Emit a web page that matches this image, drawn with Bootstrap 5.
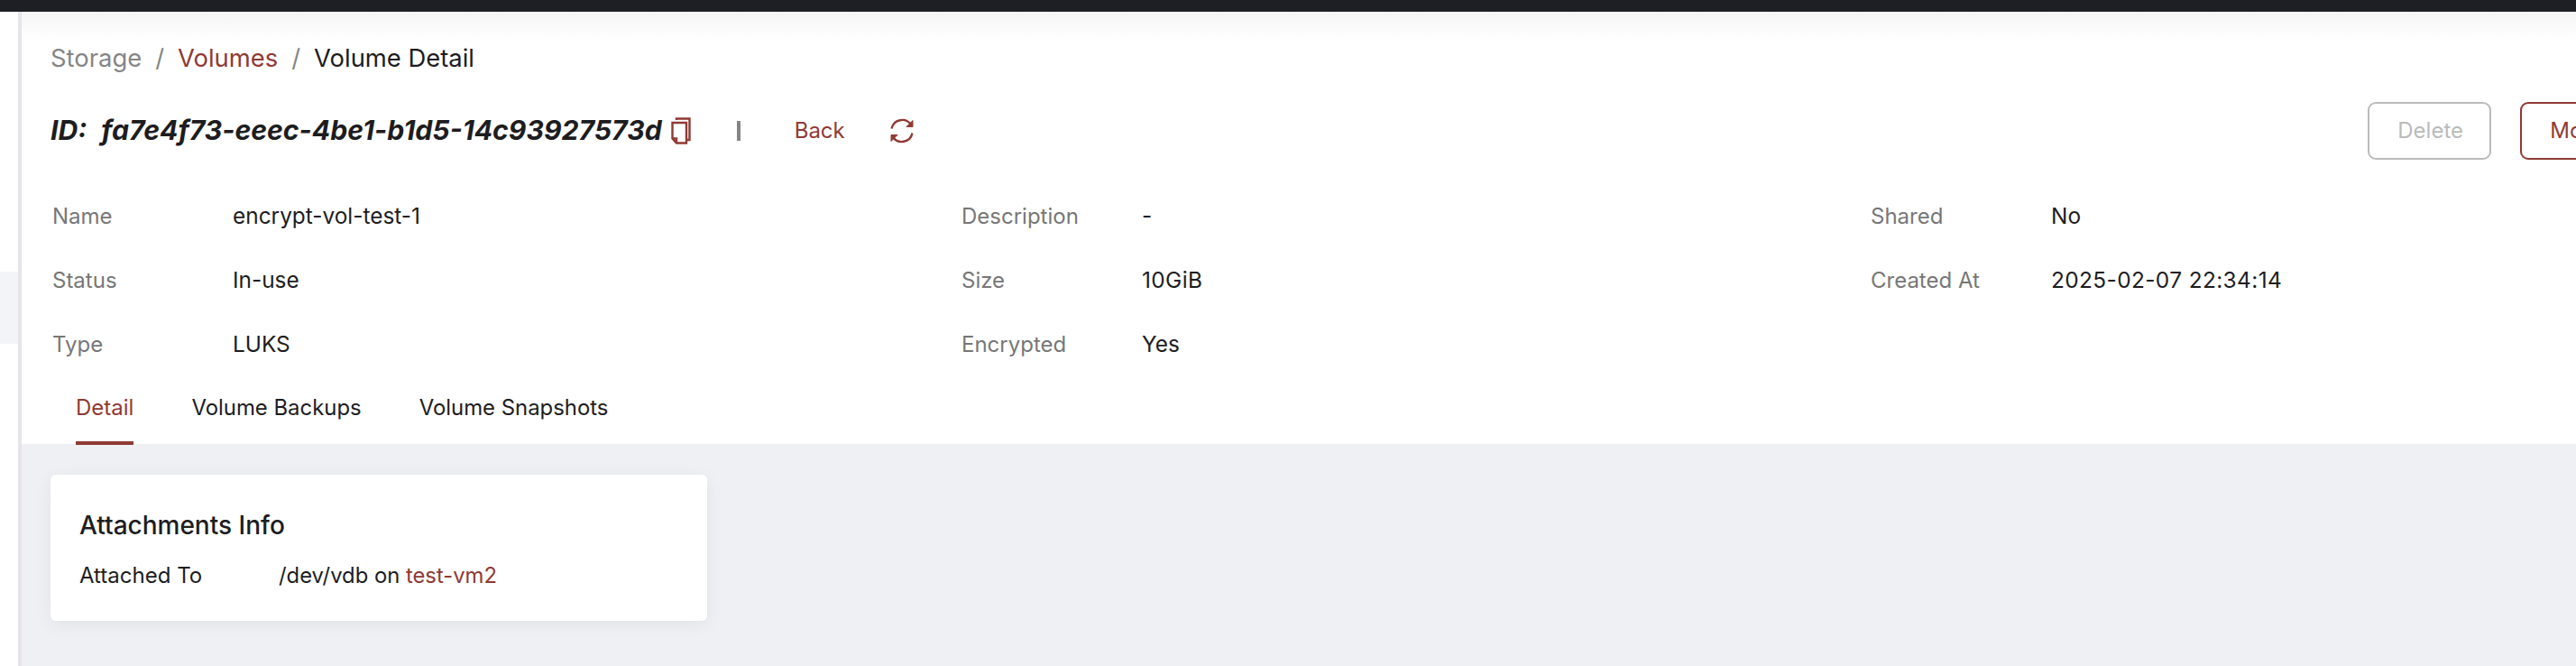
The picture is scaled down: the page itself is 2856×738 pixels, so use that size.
<!DOCTYPE html>
<html lang="en">
<head>
<meta charset="utf-8">
<title>Volume Detail</title>
<link href="https://cdn.jsdelivr.net/npm/bootstrap@5.3.0/dist/css/bootstrap.min.css" rel="stylesheet">
<style>
html,body{height:738px;overflow:hidden;background:#fff;}
body{font-family:Inter,"Liberation Sans",sans-serif;font-size:24px;line-height:1.5;color:#1d1d1f;}
a{text-decoration:none;color:#8f3a34;}
.topstrip{height:13px;background:#1e1f24;}
.shell{height:725px;}
.siderail{width:20px;padding-top:288px;flex:none;}
.sideitem{height:80px;background:#f3f4f7;}
.railline{width:4px;background:#e4e4ea;flex:none;}
.mainpane{width:3100px;flex:none;}
.headzone{height:479px;padding:0 0 0 32px;background:linear-gradient(#f5f5f5 0,#fff 34px);}
.crumbs{font-size:27.4px;line-height:40px;padding-top:31px;color:#858585;}
.crumbs .breadcrumb{margin:0;--bs-breadcrumb-item-padding-x:15px;}
.crumbs .breadcrumb-item+.breadcrumb-item::before{color:#858585;}
.crumbs .breadcrumb-item.active{color:#1d1d1f;}
.idline{height:64px;margin-top:29px;width:2863px;}
.idtext{font-size:30.2px;font-weight:700;font-style:italic;color:#1d1d1f;white-space:nowrap;}
.idtext span{margin-right:16px;}
.copyglyph{width:22px;height:30px;margin-left:10px;}
.pipe{width:4px;height:22px;background:#858585;margin-left:51px;}
.backlink{margin-left:60px;font-size:24px;}
.reloadglyph{width:28px;height:28px;margin-left:49px;}
.btn.deletebtn,.btn.morebtn{font-size:24px;height:64px;border-width:2px;border-radius:9px;padding:0 31px;background:#fff;}
.btn.deletebtn{width:137px;color:#bbb;border-color:#bbb;opacity:1;}
.btn.morebtn{color:#8f3a34;border-color:#8f3a34;margin-left:32px;}
.factgrid{width:3024px;margin-left:2px;padding-top:27px;--bs-gutter-x:0;}
.factrow{height:71px;}
.factlabel{width:200px;color:#777;}
.factvalue{font-size:24.4px;}
.stampval{letter-spacing:.4px;}
.tabstrip{margin-left:-4px;margin-top:17px;position:relative;z-index:1;}
.tabstrip .nav-link{padding:0;margin:0 32px;color:#1d1d1f;font-size:24px;line-height:36px;height:59px;border-bottom:4px solid transparent;}
.tabstrip .nav-item+.nav-item .nav-link{font-size:23.9px;}
.tabstrip .nav-link.active{color:#8f3a34;border-bottom-color:#8f3a34;}
.bodyzone{height:246px;background:#eef0f4;padding:34px 0 0 32px;}
.infocard{width:728px;height:162px;padding:38px 32px 0;background:#fff;border:0;border-radius:6px;box-shadow:0 4px 20px rgba(0,0,0,.06);}
.infocard h5{font-size:28px;line-height:36px;font-weight:500;margin:0 0 20px;color:#1d1d1f;}
.attachlabel{width:221px;}
.attachvalue{font-size:23.8px;}
</style>
</head>
<body>
<div class="topstrip"></div>
<div class="shell d-flex">
  <div class="siderail"><div class="sideitem"></div></div>
  <div class="railline"></div>
  <div class="mainpane">
    <div class="headzone">
      <nav class="crumbs" aria-label="breadcrumb">
        <ol class="breadcrumb">
          <li class="breadcrumb-item">Storage</li>
          <li class="breadcrumb-item"><a href="#">Volumes</a></li>
          <li class="breadcrumb-item active" aria-current="page">Volume Detail</li>
        </ol>
      </nav>
      <div class="idline d-flex align-items-center">
        <div class="idtext"><span>ID:</span>fa7e4f73-eeec-4be1-b1d5-14c93927573d</div>
        <svg class="copyglyph" viewBox="0 0 22 30" fill="none" stroke="#8f3a34" stroke-width="2.4"><path d="M6 3V1.500H20.500V25H17"/><path d="M1.500 6H17V28.500H6L1.500 23.500Z"/><path d="M1.500 23.500H6V28.500"/></svg>
        <div class="pipe"></div>
        <a class="backlink" href="#">Back</a>
        <svg class="reloadglyph" viewBox="0 0 28 28" fill="none" stroke="#8f3a34" stroke-width="2.400"><path d="M2.500 11.500A12 12 0 0 1 24 7"/><path d="M25.500 16.500A12 12 0 0 1 4 21"/><path d="M26 2.500V9.500H19Z" fill="#8f3a34" stroke-width="1"/><path d="M2 25.500V18.500H9Z" fill="#8f3a34" stroke-width="1"/></svg>
        <div class="ms-auto d-flex">
          <button class="btn deletebtn" type="button" disabled>Delete</button>
          <button class="btn morebtn" type="button">More</button>
        </div>
      </div>
      <div class="row factgrid g-0">
        <div class="col-4 factrow d-flex align-items-center"><div class="factlabel">Name</div><div class="factvalue">encrypt-vol-test-1</div></div>
        <div class="col-4 factrow d-flex align-items-center"><div class="factlabel">Description</div><div class="factvalue">-</div></div>
        <div class="col-4 factrow d-flex align-items-center"><div class="factlabel">Shared</div><div class="factvalue">No</div></div>
        <div class="col-4 factrow d-flex align-items-center"><div class="factlabel">Status</div><div class="factvalue">In-use</div></div>
        <div class="col-4 factrow d-flex align-items-center"><div class="factlabel">Size</div><div class="factvalue stampval">10GiB</div></div>
        <div class="col-4 factrow d-flex align-items-center"><div class="factlabel">Created At</div><div class="factvalue stampval">2025-02-07 22:34:14</div></div>
        <div class="col-4 factrow d-flex align-items-center"><div class="factlabel">Type</div><div class="factvalue">LUKS</div></div>
        <div class="col-4 factrow d-flex align-items-center"><div class="factlabel">Encrypted</div><div class="factvalue">Yes</div></div>
      </div>
      <ul class="nav tabstrip">
        <li class="nav-item"><a class="nav-link active" href="#">Detail</a></li>
        <li class="nav-item"><a class="nav-link" href="#">Volume Backups</a></li>
        <li class="nav-item"><a class="nav-link" href="#">Volume Snapshots</a></li>
      </ul>
    </div>
    <div class="bodyzone">
      <div class="card infocard">
        <h5>Attachments Info</h5>
        <div class="d-flex"><div class="attachlabel">Attached To</div><div class="attachvalue">/dev/vdb on <a href="#">test-vm2</a></div></div>
      </div>
    </div>
  </div>
</div>
<script src="https://cdn.jsdelivr.net/npm/bootstrap@5.3.0/dist/js/bootstrap.bundle.min.js"></script>
</body>
</html>
